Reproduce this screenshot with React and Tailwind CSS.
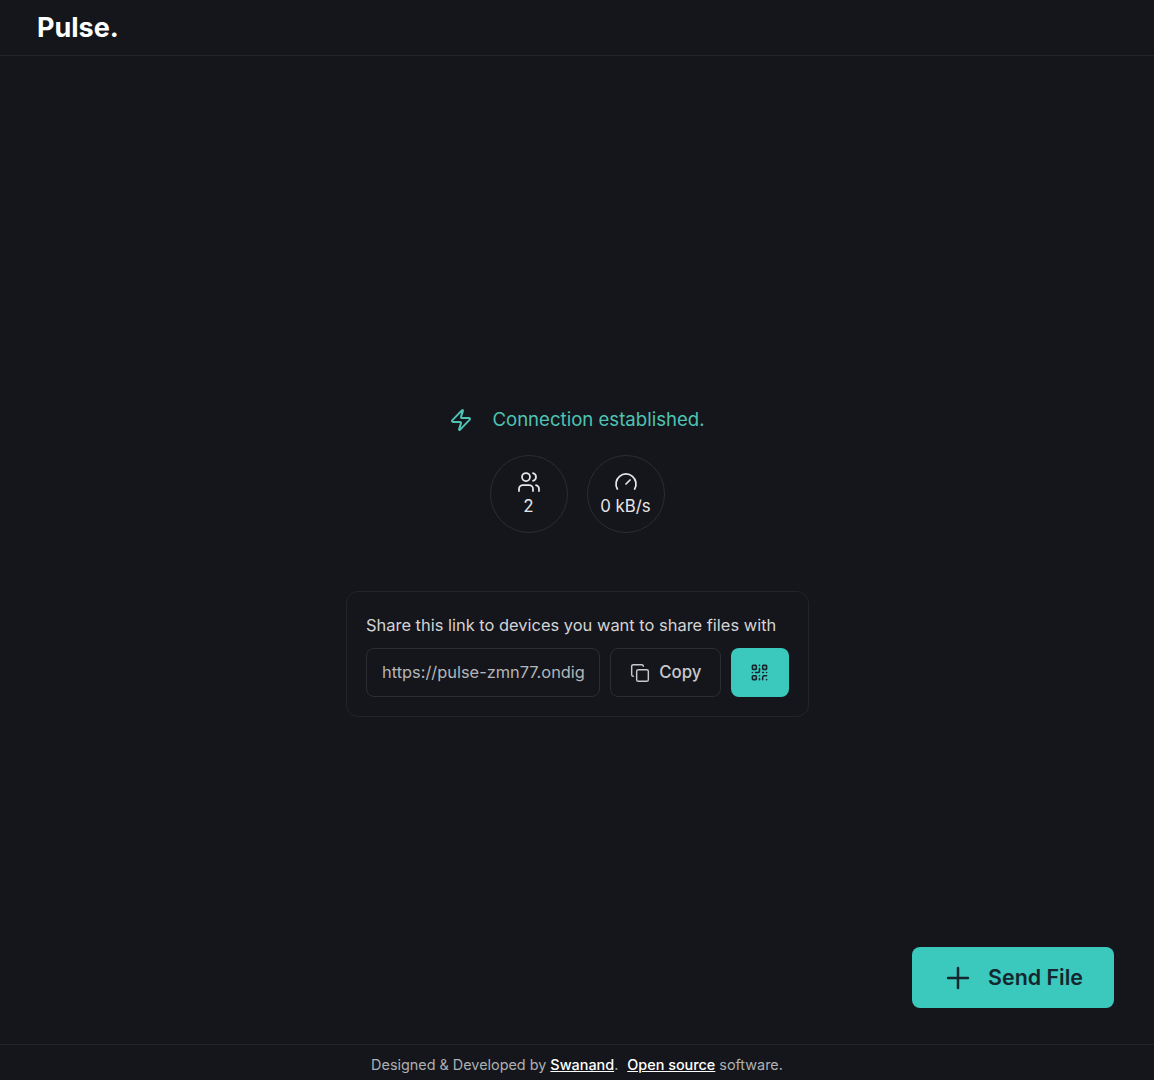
import { Zap, Users, Gauge, Copy, QrCode, Plus } from "lucide-react";

export default function App() {
    return (
        <div className="relative h-[1080px] flex flex-col bg-[#14161b] text-[#e6e6e8] font-['Inter',sans-serif] overflow-hidden">
            {/* Navbar */}
            <header className="h-[56px] shrink-0 border-b border-[#212429] pl-[37px] flex items-center">
                <span className="text-[27px] font-bold leading-none text-white">Pulse.</span>
            </header>

            {/* Main content */}
            <main className="flex-1 flex flex-col items-center pt-[350px]">
                <div className="flex items-center gap-[19px] text-[#4fc3b3] h-[28px]">
                    <Zap size={24} strokeWidth={2} />
                    <span className="text-[18.6px]">Connection established.</span>
                </div>

                <div className="flex gap-[19px] mt-[21px]">
                    <div className="w-[78px] h-[78px] rounded-full border border-[#2a2d32] flex flex-col items-center justify-center">
                        <Users size={24} strokeWidth={1.75} />
                        <span className="text-[17px] leading-[24px]">2</span>
                    </div>
                    <div className="w-[78px] h-[78px] rounded-full border border-[#2a2d32] flex flex-col items-center justify-center">
                        <Gauge size={24} strokeWidth={1.75} />
                        <span className="text-[16.8px] leading-[24px]">0 kB/s</span>
                    </div>
                </div>

                {/* Share link card */}
                <div className="mt-[58px] w-[463px] h-[126px] rounded-[12px] border border-[#212429] px-[19px] pt-[19px] ml-[1px]">
                    <p className="text-[16.45px] leading-[28px] text-[#d4d4d6] whitespace-nowrap">Share this link to devices you want to share files with</p>
                    <div className="flex gap-[10px] mt-[9px]">
                        <div className="w-[235px] h-[49px] rounded-[8px] border border-[#2a2d32] pl-[15px] flex items-center">
                            <span className="text-[16.4px] text-[#b4b5b8] whitespace-nowrap">https://pulse-zmn77.ondig</span>
                        </div>
                        <button className="w-[111px] h-[49px] rounded-[8px] border border-[#2a2d32] flex items-center justify-center gap-[9px] text-[#c8c9cb]">
                            <Copy size={20} strokeWidth={1.75} />
                            <span className="text-[16.8px] font-medium">Copy</span>
                        </button>
                        <button className="w-[58px] h-[49px] rounded-[8px] bg-[#3bc8bd] flex items-center justify-center pr-[2px] text-[#15272d]">
                            <QrCode size={19} strokeWidth={2} />
                        </button>
                    </div>
                </div>
            </main>

            {/* Send file button */}
            <button className="absolute left-[912px] top-[947px] w-[202px] h-[61px] rounded-[8px] bg-[#3bc8bd] text-[#14272e] flex items-center justify-center gap-[13px] pr-[2px]">
                <Plus size={34} strokeWidth={1.75} />
                <span className="text-[21.4px] font-semibold">Send File</span>
            </button>

            {/* Footer */}
            <footer className="h-[36px] shrink-0 border-t border-[#212429] flex items-center justify-center pt-[4px] text-[14.4px] text-[#aeafb2]">
                <span>Designed &amp; Developed by </span>
                <a className="ml-[4px] underline text-white font-medium">Swanand</a>
                <span>.</span>
                <a className="ml-[9px] underline text-white font-medium">Open source</a>
                <span className="ml-[4px]">software.</span>
            </footer>
        </div>
    );
}
